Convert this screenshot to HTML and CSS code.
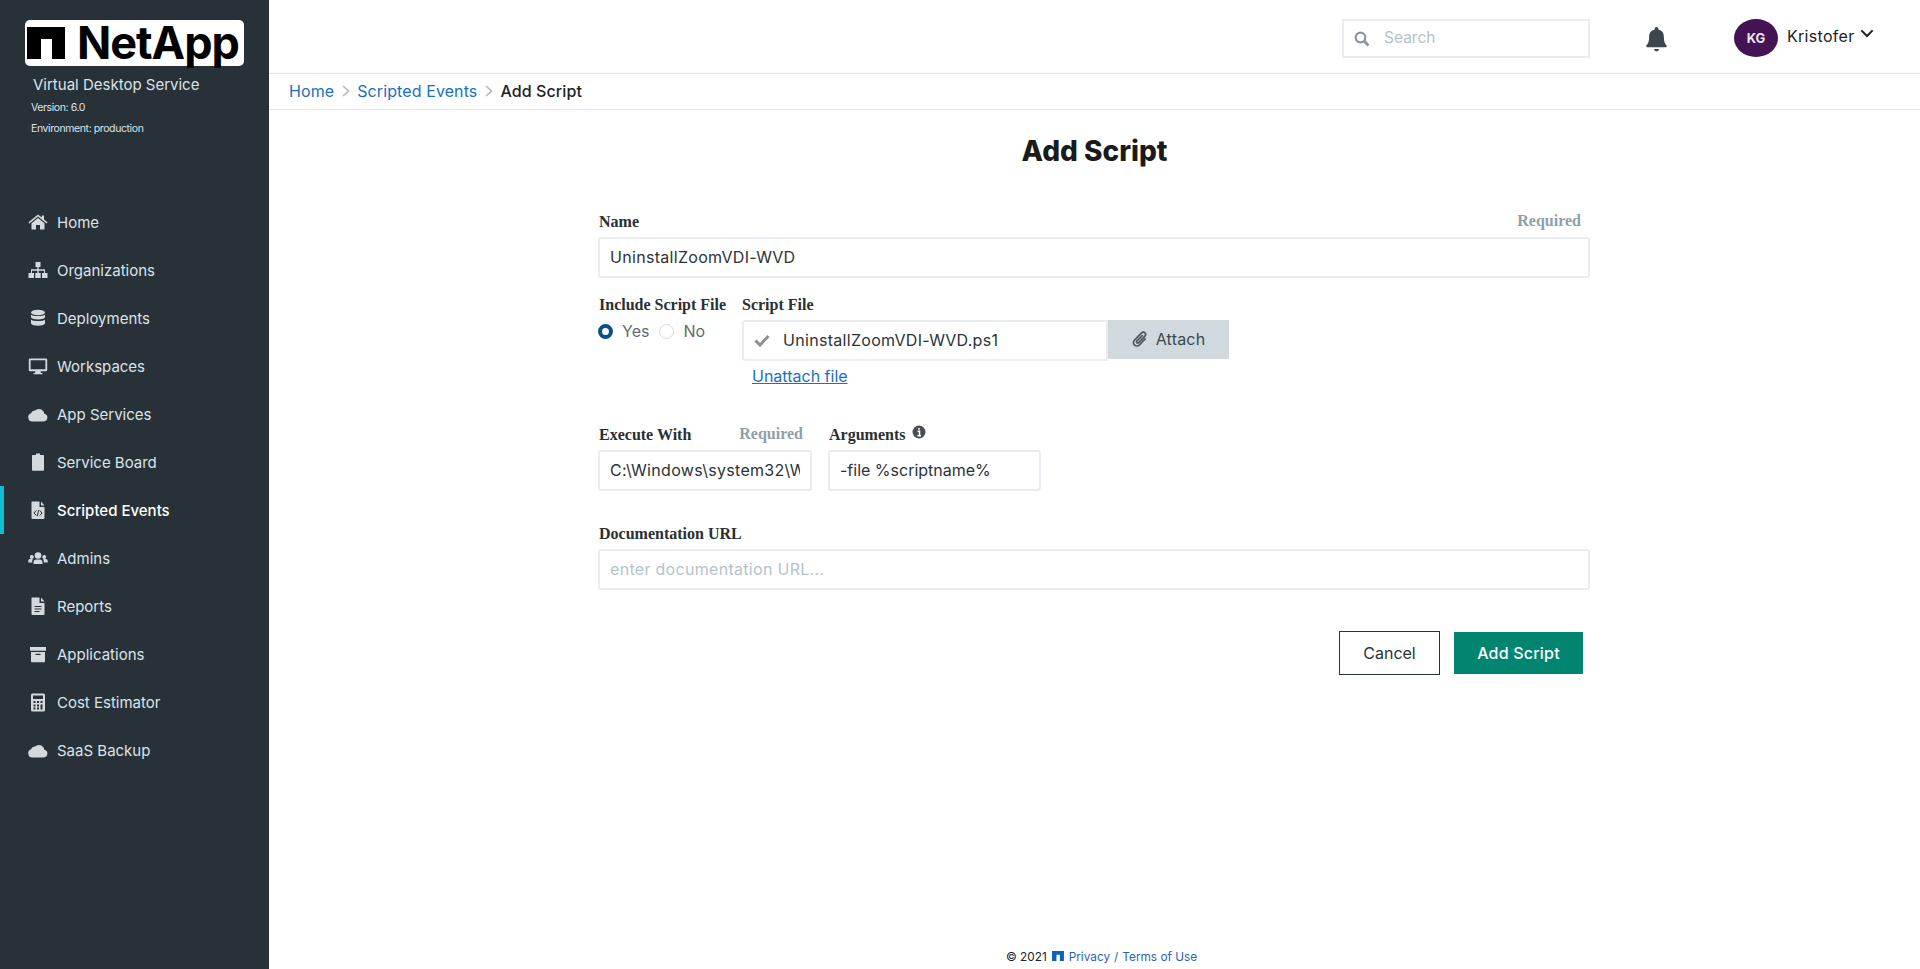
FILE: index.html
```html
<!DOCTYPE html>
<html lang="en">
<head>
  <meta charset="UTF-8">
  <title>Add Script</title>
  <link rel="stylesheet" href="styles.css">
</head>
<body>
<div class="app">
  <aside class="sidebar">
    <div class="logo">
      <svg class="logo-mark" viewBox="0 0 38 32"><path d="M0 0H38V32H25V12H14V32H0Z"/></svg>
      <span class="logo-text">NetApp</span>
    </div>
    <div class="product">Virtual Desktop Service</div>
    <div class="meta">Version: 6.0</div>
    <div class="meta">Environment: production</div>

    <nav class="nav">
      <a class="nav-item">
        <svg class="nav-icon" viewBox="0 0 20 20"><path d="M10 2.500 0.500 10.300l1 1.100L10 4.600l8.500 6.800 1-1.100L16 7.400V3.500h-2.300v2L10 2.500Z"/><path d="M10 6 3.500 11.200V17.500H8V13h4v4.500h4.500V11.200Z"/></svg>
        Home
      </a>
      <a class="nav-item">
        <svg class="nav-icon" viewBox="0 0 20 20"><path d="M7.500 2h5v5h-1.800v2.300H17V13h2.500v5h-5.500v-5h2V10.700H10.700V13H12.700v5H7.300v-5h2V10.700H4V13h2v5H.5v-5H3V9.300h6.300V7H7.500Z"/></svg>
        Organizations
      </a>
      <a class="nav-item">
        <svg class="nav-icon" viewBox="0 0 20 20"><ellipse cx="10" cy="4.500" rx="7" ry="2.800"/><path d="M3 6.500C4.500 8.500 15.500 8.500 17 6.500V9.500C15.500 12 4.500 12 3 9.500Z"/><path d="M3 11.500C4.500 13.500 15.500 13.500 17 11.500V15.500C15.500 18.500 4.500 18.500 3 15.500Z"/></svg>
        Deployments
      </a>
      <a class="nav-item">
        <svg class="nav-icon" viewBox="0 0 20 20"><path d="M2 2.500h16a1.200 1.200 0 0 1 1.200 1.200V14a1.200 1.200 0 0 1-1.200 1.200H12.500l.5 1.800h1.500v1.300h-9V17H7l.5-1.800H2A1.200 1.200 0 0 1 .8 14V3.700A1.200 1.200 0 0 1 2 2.500Zm.6 1.800v9h14.800v-9Z"/></svg>
        Workspaces
      </a>
      <a class="nav-item">
        <svg class="nav-icon" viewBox="0 0 20 20"><path d="M4.500 17.500A4.200 4.200 0 0 1 3.200 9.300 4 4 0 0 1 7 6.500 5.500 5.500 0 0 1 16.300 9.800 3.900 3.900 0 0 1 15.800 17.500Z"/></svg>
        App Services
      </a>
      <a class="nav-item">
        <svg class="nav-icon" viewBox="0 0 20 20"><path d="M8 1.500h4V3h3.200c.5 0 .8.400.8.800V18c0 .5-.4.800-.8.800H4.800A.8.800 0 0 1 4 18V3.800c0-.4.300-.8.800-.8H8Z"/></svg>
        Service Board
      </a>
      <a class="nav-item active">
        <svg class="nav-icon" viewBox="0 0 20 20"><path d="M4 1.500h7.500V7H16.500V18a.9.900 0 0 1-.9.900H4.400a.9.900 0 0 1-.9-.9V2a.5.500 0 0 1 .5-.5Zm9 0 3.500 4H13Z"/><path d="M8.300 10.500 6 13l2.300 2.500M11.700 10.500 14 13l-2.300 2.500M10.700 10 9.300 16" fill="none" stroke="#283138" stroke-width="1"/></svg>
        Scripted Events
      </a>
      <a class="nav-item">
        <svg class="nav-icon" viewBox="0 0 20 20"><circle cx="10" cy="7.500" r="3.300"/><circle cx="3.800" cy="9" r="2"/><circle cx="16.200" cy="9" r="2"/><path d="M5.500 16v-1.500C5.500 12 7 11.500 10 11.500s4.500.5 4.500 3V16ZM.3 14.500V13c0-1.500 1-2 2.500-2h2C4.300 12 4.200 13 4.200 14.500ZM19.700 14.500V13c0-1.500-1-2-2.500-2h-2c.5 1 .6 2 .6 3.500Z"/></svg>
        Admins
      </a>
      <a class="nav-item">
        <svg class="nav-icon" viewBox="0 0 20 20"><path fill-rule="evenodd" d="M4 1.500h7.500V7H16.500V18a.9.900 0 0 1-.9.900H4.400a.9.900 0 0 1-.9-.9V2a.5.500 0 0 1 .5-.5ZM6.500 10v1h7v-1Zm0 2.500v1h7v-1Zm0 2.500v1h5v-1Z"/><path d="M13 1.500l3.500 4H13Z"/></svg>
        Reports
      </a>
      <a class="nav-item">
        <svg class="nav-icon" viewBox="0 0 20 20"><path fill-rule="evenodd" d="M2 3h16v3.800H2ZM3 8h14v9.500a.8.800 0 0 1-.8.800H3.800a.8.800 0 0 1-.8-.8Zm4.500 1.800v1.200h5V9.800Z"/></svg>
        Applications
      </a>
      <a class="nav-item">
        <svg class="nav-icon" viewBox="0 0 20 20"><path fill-rule="evenodd" d="M4.500 1.500h11A1.500 1.500 0 0 1 17 3v15a1.500 1.500 0 0 1-1.500 1.500h-11A1.500 1.500 0 0 1 3 18V3a1.500 1.500 0 0 1 1.500-1.500ZM5 3.500V7h10V3.500ZM5.500 9v2h2V9Zm3.500 0v2h2V9Zm3.500 0v2h2V9ZM5.500 12.500v2h2v-2Zm3.500 0v2h2v-2Zm3.500 0v5h2v-5ZM5.500 15.500v2h2v-2Zm3.500 0v2h2v-2Z"/></svg>
        Cost Estimator
      </a>
      <a class="nav-item">
        <svg class="nav-icon" viewBox="0 0 20 20"><path d="M4.500 17.500A4.200 4.200 0 0 1 3.200 9.300 4 4 0 0 1 7 6.500 5.500 5.500 0 0 1 16.300 9.800 3.900 3.900 0 0 1 15.800 17.500Z"/></svg>
        SaaS Backup
      </a>
    </nav>
  </aside>

  <main class="main">
    <header class="topbar">
      <div class="search">
        <svg class="search-icon" viewBox="0 0 16 16"><circle cx="6.500" cy="6.500" r="4.800" fill="none" stroke="#8d9499" stroke-width="2.200"/><path d="M10 10l4.500 4.500" stroke="#8d9499" stroke-width="2.600"/></svg>
        <input class="search-input" type="text" placeholder="Search">
      </div>
      <svg class="bell" viewBox="0 0 20 25"><path d="M10 0a1.800 1.800 0 0 1 1.800 1.800v.7c3.400.8 5.300 3.500 5.300 7 0 5 1.400 6.800 2.500 8 .5.600.2 2-1 2H1.400c-1.200 0-1.500-1.400-1-2 1.100-1.200 2.500-3 2.500-8 0-3.500 1.900-6.200 5.300-7v-.7A1.800 1.800 0 0 1 10 0Z"/><path d="M7.600 21.200h4.800a2.400 2.400 0 0 1-4.800 0Z"/></svg>
      <div class="user">
        <span class="avatar">KG</span>
        <span class="user-name">Kristofer</span>
        <svg class="chevron" viewBox="0 0 12 8"><path d="M1 1.200l5 5 5-5" fill="none" stroke="#1b2226" stroke-width="1.800"/></svg>
      </div>
    </header>

    <div class="breadcrumb">
      <a>Home</a>
      <svg class="crumb-sep" viewBox="0 0 8 12"><path d="M1 1l5.500 5L1 11" fill="none" stroke="#b4b9bc" stroke-width="1.600"/></svg>
      <a>Scripted Events</a>
      <svg class="crumb-sep" viewBox="0 0 8 12"><path d="M1 1l5.500 5L1 11" fill="none" stroke="#b4b9bc" stroke-width="1.600"/></svg>
      <span class="crumb-current">Add Script</span>
    </div>

    <div class="page">
      <h1>Add Script</h1>

      <form class="form">
        <div class="label-row">
          <label>Name</label>
          <span class="required required-name">Required</span>
        </div>
        <input class="field" type="text" value="UninstallZoomVDI-WVD">

        <div class="script-row">
          <div class="include">
            <label>Include Script File</label>
            <div class="radios">
              <span class="radio checked"></span><span class="radio-text">Yes</span>
              <span class="radio"></span><span class="radio-text">No</span>
            </div>
          </div>
          <div class="script-file">
            <label>Script File</label>
            <div class="file-line">
              <div class="file-box">
                <svg class="check" viewBox="0 0 16 13"><path d="M1.500 6.500l4.500 4.500L14.500 2" fill="none" stroke="#8c9093" stroke-width="3"/></svg>
                UninstallZoomVDI-WVD.ps1
              </div>
              <div class="attach">
                <svg class="clip" viewBox="0 0 14 16"><path d="M12 7.500 6.800 13c-1.500 1.500-3.600 1.500-4.800.3s-1.100-3.200.3-4.600l5.900-6c1-1 2.400-1 3.200-.2s.8 2.200-.2 3.200L5.800 11.200c-.5.500-1.200.5-1.600.1s-.4-1.100.1-1.600L9.500 4.500" fill="none" stroke="#50585e" stroke-width="1.500"/></svg>
                Attach
              </div>
            </div>
            <a class="unattach">Unattach file</a>
          </div>
        </div>

        <div class="exec-row">
          <div class="exec">
            <div class="label-row">
              <label>Execute With</label>
              <span class="required">Required</span>
            </div>
            <input class="field" type="text" value="C:\Windows\system32\WindowsPowerShell\v1.0\powershell.exe">
          </div>
          <div class="args">
            <div class="label-row args-label">
              <label>Arguments</label>
              <svg class="info" viewBox="0 0 14 14"><circle cx="7" cy="7" r="6.500" fill="#4b4f52"/><path d="M7 3v1.800M5.600 6.300H7.500V10.500M5.400 10.800H9" fill="none" stroke="#fff" stroke-width="1.500"/></svg>
            </div>
            <input class="field field-args" type="text" value="-file %scriptname%">
          </div>
        </div>

        <div class="doc-row">
          <div class="label-row">
            <label>Documentation URL</label>
          </div>
          <input class="field" type="text" placeholder="enter documentation URL...">
        </div>

        <div class="actions">
          <button type="button" class="btn-cancel">Cancel</button>
          <button type="button" class="btn-submit">Add Script</button>
        </div>
      </form>
    </div>

    <footer class="footer">
      <span>© 2021</span>
      <svg class="footer-mark" viewBox="0 0 38 32"><path d="M0 0H38V32H25V12H14V32H0Z"/></svg>
      <a>Privacy</a> <b>/</b> <a>Terms of Use</a>
    </footer>
  </main>
</div>
</body>
</html>
```

FILE: styles.css
```css
* {
  box-sizing: border-box;
}

html, body {
  height: 100%;
}

body {
  margin: 0;
  font-family: Inter, 'Noto Sans', sans-serif;
  background-color: #ffffff;
  color: #1b2226;
  overflow: hidden;
}

a {
  color: #1a6fc4;
}

.app {
  display: flex;
  height: 969px;
}

/* sidebar */
.sidebar {
  width: 269px;
  flex-shrink: 0;
  background-color: #283138;
  color: #dbe3e8;
  padding-top: 20px;
}

.logo {
  width: 219px;
  height: 46px;
  margin-left: 25px;
  background-color: #ffffff;
  border-radius: 5px;
  display: flex;
  align-items: center;
  padding-left: 2px;
}

.logo-mark {
  width: 38px;
  height: 32px;
  fill: #000000;
}

.logo-text {
  margin-left: 12px;
  font-size: 45px;
  font-weight: 700;
  line-height: 46px;
  letter-spacing: -1px;
  color: #000000;
}

.product {
  margin: 9px 0 0 33px;
  font-size: 15px;
  line-height: 20px;
}

.meta {
  margin: 4px 0 0 31px;
  font-size: 10.5px;
  line-height: 17px;
  letter-spacing: -0.4px;
}

.nav {
  margin-top: 61px;
}

.nav-item {
  display: flex;
  align-items: center;
  height: 48px;
  padding-left: 28px;
  font-size: 15px;
  color: #dbe3e8;
}

.nav-item.active {
  color: #ffffff;
  font-weight: 500;
  border-left: 4px solid #12bcd6;
  padding-left: 24px;
}

.nav-icon {
  width: 20px;
  height: 20px;
  margin-right: 9px;
  fill: #d3d9dd;
}

/* top */
.main {
  flex: 1;
  display: flex;
  flex-direction: column;
  min-width: 0;
}

.topbar {
  height: 74px;
  border-bottom: 1px solid #e3e5e6;
  display: flex;
  align-items: flex-start;
  padding: 19px 0 0 1073px;
}

.search {
  width: 248px;
  height: 39px;
  border: 2px solid #e9edf1;
  display: flex;
  align-items: center;
  padding-left: 10px;
}

.search-icon {
  width: 16px;
  height: 16px;
  flex-shrink: 0;
}

.search-input {
  width: 190px;
  margin: -2px 0 0 14px;
  border: none;
  outline: none;
  padding: 0;
  font-family: inherit;
  font-size: 15.5px;
}

.search-input::placeholder {
  color: #b4c3ca;
}

.bell {
  width: 21px;
  height: 26px;
  margin: 8px 0 0 56px;
  fill: #3c474d;
}

.user {
  display: flex;
  align-items: flex-start;
  margin-left: 67px;
}

.avatar {
  width: 44px;
  height: 38px;
  border-radius: 50%;
  background-color: #431354;
  color: #e8e4ee;
  font-size: 13px;
  font-weight: 700;
  display: flex;
  align-items: center;
  justify-content: center;
}

.user-name {
  margin: 8px 0 0 9px;
  font-size: 16px;
  line-height: 18px;
  letter-spacing: 0.3px;
}

.chevron {
  width: 14px;
  height: 9px;
  margin: 10px 0 0 5px;
}

.breadcrumb {
  height: 36px;
  border-bottom: 1px solid #e3e5e6;
  display: flex;
  align-items: center;
  padding: 0 0 2px 20px;
  font-size: 16px;
  letter-spacing: 0.1px;
}

.crumb-sep {
  width: 8px;
  height: 12px;
  margin: 0 7px 0 8px;
}

.crumb-current {
  color: #1b2226;
  font-weight: 500;
}

/* form */
.page {
  flex: 1;
}

h1 {
  margin: 25px 0 0;
  text-align: center;
  font-size: 28px;
  line-height: 32px;
  font-weight: 800;
  color: #1b1b1b;
}

.form {
  width: 992px;
  margin: 45px 0 0 329px;
}

label {
  font-family: 'Liberation Serif', serif;
  font-weight: 700;
  font-size: 16px;
  color: #2a2f33;
}

.label-row {
  display: flex;
  justify-content: space-between;
  align-items: center;
  height: 20px;
  padding-left: 1px;
  margin-bottom: 5px;
}

.required {
  font-family: 'Liberation Serif', serif;
  font-weight: 700;
  font-size: 16px;
  color: #8fa0aa;
  margin-top: -2px;
}

.required-name {
  margin-right: 9px;
}

.field {
  display: block;
  width: 100%;
  height: 41px;
  border: 2px solid #e9edf1;
  border-radius: 3px;
  outline: none;
  padding: 0 10px 2px;
  font-family: inherit;
  font-size: 16px;
  letter-spacing: 0.3px;
  color: #2b3338;
}

.field-args {
  letter-spacing: 0;
}

.field::placeholder {
  color: #b4c3ca;
}

.script-row {
  display: flex;
  margin-top: 17px;
}

.include {
  width: 144px;
  padding-left: 1px;
}

.script-file label,
.include label {
  display: block;
  line-height: 20px;
}

.radios {
  display: flex;
  align-items: center;
  margin: 6px 0 0 -1px;
  font-size: 16px;
  color: #5f6b72;
}

.radio {
  width: 15px;
  height: 15px;
  border-radius: 50%;
  border: 1px solid #d4d9dc;
}

.radio.checked {
  border: 4.5px solid #0b4f8a;
}

.radio-text {
  margin: 0 10px 0 9px;
}

.script-file {
  flex: 1;
}

.file-line {
  display: flex;
  margin-top: 5px;
}

.file-box {
  width: 366px;
  height: 41px;
  border: 2px solid #e9edf1;
  border-radius: 3px 0 0 3px;
  display: flex;
  align-items: center;
  padding: 0 0 2px 10px;
  font-size: 16px;
  letter-spacing: 0.3px;
  color: #2b3338;
}

.check {
  width: 16px;
  height: 13px;
  margin: 2px 13px 0 0;
}

.attach {
  width: 121px;
  height: 39px;
  background-color: #d0d9de;
  display: flex;
  align-items: center;
  justify-content: center;
  padding-bottom: 1px;
  font-size: 16px;
  letter-spacing: 0.2px;
  color: #3c474d;
}

.clip {
  width: 16px;
  height: 18px;
  margin-right: 8px;
}

.unattach {
  display: inline-block;
  margin: 5px 0 0 10px;
  font-size: 16px;
  line-height: 20px;
  text-decoration: underline;
}

.exec-row {
  display: flex;
  margin-top: 39px;
}

.exec {
  width: 214px;
}

.exec .required {
  margin-right: 9px;
}

.args {
  width: 213px;
  margin-left: 16px;
}

.args-label {
  justify-content: flex-start;
}

.info {
  width: 14px;
  height: 14px;
  margin: -6px 0 0 7px;
}

.doc-row {
  margin-top: 33px;
}

.actions {
  display: flex;
  justify-content: flex-end;
  align-items: center;
  margin: 41px 7px 0 0;
}

.btn-cancel,
.btn-submit {
  font-family: inherit;
  font-size: 16px;
  cursor: pointer;
}

.btn-cancel {
  width: 101px;
  height: 44px;
  background-color: #ffffff;
  border: 1px solid #2b3338;
  color: #2b3338;
}

.btn-submit {
  width: 129px;
  height: 42px;
  margin-left: 14px;
  background-color: #018571;
  border: none;
  color: #ffffff;
  font-weight: 500;
  letter-spacing: 0.2px;
}

.footer {
  height: 24px;
  display: flex;
  align-items: center;
  justify-content: center;
  gap: 4px;
  padding-left: 14px;
  font-size: 11.8px;
}

.footer a {
  color: #2a62b8;
}

.footer b {
  font-weight: 400;
  color: #2a62b8;
}

.footer-mark {
  width: 12px;
  height: 10px;
  margin: 0 1px 3px 1px;
  fill: #0a63bd;
}
```
